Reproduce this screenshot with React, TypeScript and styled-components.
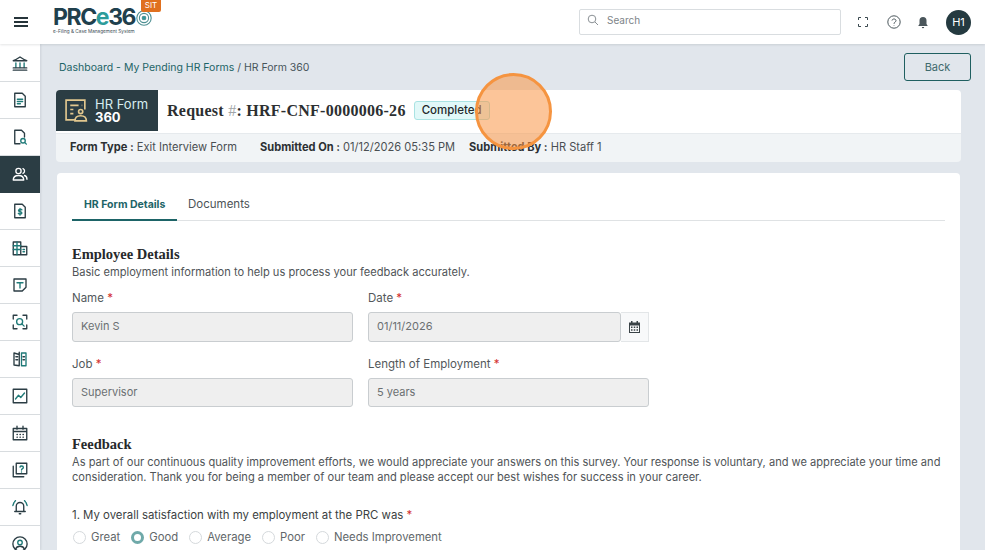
import * as React from 'react'
import styled, { createGlobalStyle } from 'styled-components'

const dark = '#2b3d44'
const teal = '#1f7a78'
const body = '"Inter", "Open Sans", sans-serif'
const serif = '"Liberation Serif", "DejaVu Serif", serif'

const Global = createGlobalStyle`
  html, body { margin: 0; padding: 0; height: 100%; overflow: hidden; }
  body { font-family: ${body}; background: #e1e6ec; color: #3c4043; }
  * { box-sizing: border-box; }
`

const Shell = styled.div`
  position: relative;
  width: 985px;
  height: 550px;
  overflow: hidden;
  display: flex;
  flex-direction: column;
`

const TopBar = styled.header`
  height: 44px;
  flex: none;
  background: #fff;
  display: flex;
  align-items: center;
  box-shadow: 0 1px 2px rgba(40, 50, 60, 0.12);
  z-index: 2;
`

const Burger = styled.button`
  width: 42px;
  height: 44px;
  border: 0;
  background: none;
  padding: 0;
  display: flex;
  flex-direction: column;
  align-items: center;
  justify-content: center;
  gap: 2px;
  span {
    width: 14px;
    height: 2px;
    background: #26343a;
  }
`

const Logo = styled.div`
  position: relative;
  width: 120px;
  margin-left: 11px;
  height: 44px;
  padding-top: 7px;
`

const LogoMark = styled.div`
  display: flex;
  align-items: center;
  height: 21px;
  font-weight: 700;
  font-size: 23px;
  letter-spacing: -1.4px;
  line-height: 21px;
  color: #20404d;
  em {
    font-style: normal;
    color: #2d9c9a;
  }
  svg {
    margin-left: 1px;
  }
`

const LogoSub = styled.div`
  font-size: 4.7px;
  line-height: 6px;
  color: #3b4d55;
  white-space: nowrap;
`

const SitBadge = styled.span`
  position: absolute;
  left: 88px;
  top: 0;
  width: 20px;
  height: 12px;
  background: #e0701f;
  color: #fff;
  font-size: 8px;
  line-height: 10px;
  text-align: center;
  border-radius: 0 0 2px 2px;
`

const SearchBox = styled.div`
  margin-left: 406px;
  width: 262px;
  height: 26px;
  border: 1px solid #d9dde0;
  border-radius: 2px;
  display: flex;
  align-items: center;
  padding: 0 0 4px 7px;
  gap: 8px;
  font-size: 10px;
  color: #7d8488;
`

const TopIcons = styled.div`
  display: flex;
  align-items: center;
  margin-left: 15px;
`

const TopIcon = styled.span<{ $w: number }>`
  width: ${p => p.$w}px;
  display: flex;
  justify-content: center;
`

const Avatar = styled.div`
  width: 25px;
  height: 25px;
  margin-left: 17px;
  border-radius: 50%;
  background: #243a40;
  color: #fff;
  font-size: 11px;
  display: flex;
  align-items: center;
  justify-content: center;
`

const Columns = styled.div`
  flex: 1;
  display: flex;
  min-height: 0;
`

const Sidebar = styled.nav`
  width: 40px;
  flex: none;
  background: #fff;
  padding-top: 1px;
  box-shadow: 1px 0 2px rgba(40, 50, 60, 0.1);
`

const SideItem = styled.div<{ $active?: boolean }>`
  height: 37px;
  display: flex;
  align-items: center;
  justify-content: center;
  background: ${p => (p.$active ? dark : '#fff')};
  border-bottom: 1px solid ${p => (p.$active ? dark : '#d8dcdf')};
`

const Main = styled.main`
  flex: 1;
  min-width: 0;
  padding: 9px 14px 0 16px;
`

const CrumbRow = styled.div`
  height: 28px;
  display: flex;
  align-items: center;
  justify-content: space-between;
  padding-left: 3px;
  font-size: 10.5px;
  color: #48555b;
`

const CrumbLink = styled.span`
  color: #1d6467;
`

const BackButton = styled.button`
  width: 67px;
  height: 28px;
  border: 1px solid #1f5f60;
  border-radius: 3px;
  background: transparent;
  font-family: ${body};
  font-size: 11px;
  color: #3f6a6d;
`

const RequestCard = styled.section`
  margin-top: 9px;
  width: 905px;
  border-radius: 4px 4px 0 0;
  overflow: hidden;
`

const RequestHead = styled.div`
  height: 43px;
  background: #fff;
  display: flex;
  align-items: flex-start;
`

const FormTag = styled.div`
  width: 102px;
  height: 41px;
  background: ${dark};
  color: #fff;
  display: flex;
  align-items: center;
  padding-left: 8px;
  gap: 6px;
`

const FormTagText = styled.div`
  font-size: 13px;
  line-height: 13px;
  color: #d8edf0;
  b {
    display: block;
    color: #fff;
    font-weight: 700;
    font-size: 13px;
  }
`

const RequestTitle = styled.h1`
  margin: 0 0 0 9px;
  line-height: 41px;
  font-family: ${serif};
  font-weight: 700;
  font-size: 16px;
  letter-spacing: 0.26px;
  color: #2c2f31;
  i {
    font-style: normal;
    font-weight: 400;
    color: #a0a5a8;
  }
`

const StatusPill = styled.span`
  margin: 11px 0 0 8px;
  width: 76px;
  height: 19px;
  border: 1px solid #a9e3e3;
  border-radius: 3px;
  background: #e1f8f8;
  font-size: 11.5px;
  font-weight: 500;
  line-height: 16px;
  padding-left: 7px;
  color: #23282b;
`

const MetaStrip = styled.div`
  height: 29px;
  background: #f1f4f6;
  border-top: 1px solid #e6eaed;
  display: flex;
  align-items: center;
  padding: 0 0 3px 14px;
  font-size: 11.1px;
  color: #4a4f52;
  border-radius: 0 0 4px 4px;
`

const MetaItem = styled.span<{ $w: number }>`
  width: ${p => p.$w}px;
  white-space: nowrap;
  b {
    font-weight: 700;
    color: #2c3033;
  }
`

const FormCard = styled.section`
  margin: 11px 0 0 1px;
  width: 903px;
  height: 400px;
  background: #fff;
  border-radius: 4px;
  padding: 17px 15px;
`

const Tabs = styled.div`
  height: 31px;
  display: flex;
  border-bottom: 1px solid #dfe2e4;
`

const Tab = styled.div<{ $active?: boolean }>`
  height: 31px;
  width: ${p => (p.$active ? 105 : 84)}px;
  padding-left: ${p => (p.$active ? 12 : 11)}px;
  line-height: 29px;
  font-size: ${p => (p.$active ? 10.5 : 11.5)}px;
  font-weight: ${p => (p.$active ? 700 : 400)};
  color: ${p => (p.$active ? '#1d6467' : '#4d5356')};
  border-bottom: ${p => (p.$active ? '2px solid #1d6467' : '0')};
`

const SectionTitle = styled.h2<{ $top: number }>`
  margin: ${p => p.$top}px 0 0;
  font-family: ${serif};
  font-weight: 700;
  font-size: 14.5px;
  line-height: 21px;
  color: #26292b;
`

const SectionText = styled.p`
  margin: 0;
  font-size: 11.1px;
  line-height: 15px;
  color: #4f5457;
`

const FieldGrid = styled.div`
  margin-top: 10px;
  display: grid;
  grid-template-columns: 281px 281px;
  column-gap: 15px;
  row-gap: 14px;
`

const Field = styled.div`
  display: flex;
  flex-direction: column;
`

const Label = styled.label`
  height: 16px;
  margin-bottom: 6px;
  font-size: 11.5px;
  line-height: 16px;
  color: #53585b;
  span {
    color: #d32f2f;
  }
`

const InputRow = styled.div`
  display: flex;
`

const Input = styled.div`
  flex: 1;
  height: 30px;
  background: #efefef;
  border: 1px solid #c9cdd0;
  border-radius: 3px;
  padding-left: 8px;
  line-height: 27px;
  font-size: 11px;
  color: #6b6f72;
`

const Addon = styled.div`
  width: 28px;
  height: 30px;
  border: 1px solid #e3e6e8;
  border-left: 0;
  background: #f8f9fa;
  display: flex;
  align-items: center;
  justify-content: center;
`

const Question = styled.div`
  margin-top: 22px;
  font-size: 11.4px;
  line-height: 16px;
  color: #3b3f42;
  span {
    color: #d32f2f;
  }
`

const RadioRow = styled.div`
  margin-top: 7px;
  padding-left: 1px;
  display: flex;
  align-items: center;
  font-size: 11.3px;
  color: #62676a;
`

const RadioLabel = styled.span`
  display: flex;
  align-items: center;
  margin-right: 11px;
  gap: 5px;
`

const RadioDot = styled.span<{ $on?: boolean }>`
  width: 13px;
  height: 13px;
  border-radius: 50%;
  border: ${p => (p.$on ? '3.5px solid #6fa9a9' : '1px solid #d5d9dc')};
  background: #fff;
`

const Spotlight = styled.div`
  position: absolute;
  left: 475px;
  top: 73px;
  width: 77px;
  height: 77px;
  border-radius: 50%;
  border: 3px solid #f59440;
  background: rgba(250, 150, 70, 0.55);
`

const S = (p: { children: React.ReactNode; size?: number; color?: string }) => (
  <svg
    width={p.size || 18}
    height={p.size || 18}
    viewBox="0 0 24 24"
    fill="none"
    stroke={p.color || dark}
    strokeWidth="1.8"
    strokeLinecap="round"
    strokeLinejoin="round"
  >
    {p.children}
  </svg>
)

const sideIcons: React.ReactNode[] = [
  <S key="bank">
    <path d="M3 9c3-1 6-3 9-5 3 2 6 4 9 5z" />
    <path d="M6.500 12v6M12 12v6M17.500 12v6" stroke={teal} />
    <path d="M3 18.500h18M3 21.500h18" />
  </S>,
  <S key="doc">
    <path d="M5 3h10l4 4v14H5z" />
    <path d="M8.500 11h7M8.500 14h7M8.500 17h4" stroke={teal} />
  </S>,
  <S key="search">
    <path d="M12 21H5V3h9l4 4v5" />
    <circle cx="16" cy="17" r="3" stroke={teal} />
    <path d="m18.500 19.500 2 2" stroke={teal} />
  </S>,
  <S key="users" color="#fff">
    <circle cx="10" cy="8" r="3.500" />
    <path d="M3 20c0-4 3-6 7-6s7 2 7 6z" />
    <path d="M16 4.800a3.500 3.500 0 0 1 0 6.400M18 14c2 .6 3.300 2.600 3.300 5" />
  </S>,
  <S key="money">
    <path d="M5 3h10l4 4v14H5z" />
    <path d="M14.500 10.500c-.5-1-4.500-1.300-4.500.8 0 2.200 4.500 1 4.500 3.200 0 2-4 1.900-4.700.6M12 8.500v9" stroke={teal} />
  </S>,
  <S key="building" color={teal}>
    <path d="M3 21V4h10v17zM13 10h8v11h-8" stroke={dark} />
    <path d="M3 9h10M3 14h10M8 4v17M16 14h2M16 17h2" />
  </S>,
  <S key="note">
    <path d="M4 4h16v11l-5 5H4z" />
    <path d="M8 9h8M12 9v7" stroke={teal} />
  </S>,
  <S key="scan">
    <path d="M3 8V3h5M16 3h5v5M21 16v5h-5M8 21H3v-5" />
    <circle cx="11.500" cy="11.500" r="4" stroke={teal} />
    <path d="m14.500 14.500 3 3" stroke={teal} />
  </S>,
  <S key="book">
    <path d="M11 6 4 4v16l7 1V3" />
    <path d="M14 4h6v17h-6z" stroke={teal} />
    <path d="M6.500 9H9M6.500 13H9M16 9h2M16 13h2" />
  </S>,
  <S key="chart">
    <path d="M3 3h18v18H3z" />
    <path d="m6 16 4-5 3 3 5-6" stroke={teal} />
  </S>,
  <S key="calendar">
    <path d="M3 6h18v15H3zM3 10h18M8 3v4M16 3v4" />
    <path d="M8 14h.5M12 14h.5M16 14h.5M8 17.500h.5M12 17.500h.5M16 17.500h.5" />
  </S>,
  <S key="help">
    <path d="M7 3h14v14H7z" />
    <path d="M3 7v14h14" />
    <path d="M12 8c.5-1.800 4.500-1.800 4.500.5 0 1.700-2.500 1.700-2.500 3.500M14 14.500v.2" stroke={teal} />
  </S>,
  <S key="bell">
    <path d="M7 18v-7a5 5 0 0 1 10 0v7zM5 18h14M11 21h2" />
    <path d="M4 6 2.500 10M20 6l1.500 4M6 3.500 4.800 5M18 3.500 19.200 5" stroke={teal} />
  </S>,
  <S key="user">
    <circle cx="12" cy="12" r="9.500" />
    <circle cx="12" cy="10" r="3" stroke={teal} />
    <path d="M6 19c1-3 3-4 6-4s5 1 6 4" />
  </S>,
]

const ReqStar = () => <span> *</span>

const App = () => (
  <Shell>
    <Global />
    <TopBar>
      <Burger aria-label="menu">
        <span />
        <span />
        <span />
      </Burger>
      <Logo>
        <LogoMark>
          PRC<em>e</em>36
          <svg width="16" height="16" viewBox="0 0 16 16" fill="none" stroke="#4d8f92" strokeWidth="1.100">
            <circle cx="8" cy="8" r="7.200" />
            <circle cx="8" cy="8" r="4.600" />
            <circle cx="8" cy="8" r="1.800" fill="#2d9c9a" />
          </svg>
        </LogoMark>
        <LogoSub>e-Filing &amp; Case Management System</LogoSub>
        <SitBadge>SIT</SitBadge>
      </Logo>
      <SearchBox>
        <svg width="12" height="12" viewBox="0 0 12 12" fill="none" stroke="#8a9094" strokeWidth="1">
          <circle cx="5" cy="5" r="3.800" />
          <path d="m8 8 3 3" />
        </svg>
        Search
      </SearchBox>
      <TopIcons>
        <TopIcon $w={14}>
          <svg width="10" height="10" viewBox="0 0 10 10" fill="none" stroke="#3c4a50" strokeWidth="1">
            <path d="M.5 3V.5H3M7 .5h2.500V3M9.500 7v2.500H7M3 9.500H.5V7" />
          </svg>
        </TopIcon>
        <TopIcon $w={47}>
          <svg width="14" height="14" viewBox="0 0 14 14" fill="none" stroke="#4a565b" strokeWidth="1">
            <circle cx="7" cy="7" r="6.200" />
            <path d="M5 5.500C5.200 3.500 9 3.500 9 5.600 9 7.200 7 7 7 8.800M7 10.200v.5" />
          </svg>
        </TopIcon>
        <TopIcon $w={12}>
          <svg width="12" height="13" viewBox="0 0 12 13" fill="#4a565b">
            <path d="M6 1a3.500 3.500 0 0 0-3.500 3.500V8L1.200 10h9.600L9.500 8V4.500A3.500 3.500 0 0 0 6 1zM4.800 11a1.200 1.200 0 0 0 2.400 0z" />
          </svg>
        </TopIcon>
        <Avatar>H1</Avatar>
      </TopIcons>
    </TopBar>
    <Columns>
      <Sidebar>
        {sideIcons.map((icon, i) => (
          <SideItem key={i} $active={i === 3}>
            {icon}
          </SideItem>
        ))}
      </Sidebar>
      <Main>
        <CrumbRow>
          <span>
            <CrumbLink>Dashboard - My Pending HR Forms</CrumbLink> / HR Form 360
          </span>
          <BackButton>Back</BackButton>
        </CrumbRow>
        <RequestCard>
          <RequestHead>
            <FormTag>
              <svg width="25" height="25" viewBox="0 0 24 24" fill="none" stroke="#e2c78e" strokeWidth="1.600">
                <path d="M11 21H2V2h18v9" />
                <path d="M6 7h8M6 11h3M6 15h3M17 7h.5" />
                <circle cx="16" cy="13" r="2" />
                <path d="M10.500 22c0-3.500 2.500-5 5.500-5s5.500 1.500 5.500 5z" />
              </svg>
              <FormTagText>
                HR Form
                <b>360</b>
              </FormTagText>
            </FormTag>
            <RequestTitle>
              Request <i>#</i>: HRF-CNF-0000006-26
            </RequestTitle>
            <StatusPill>Completed</StatusPill>
          </RequestHead>
          <MetaStrip>
            <MetaItem $w={190}>
              <b>Form Type :</b> Exit Interview Form
            </MetaItem>
            <MetaItem $w={209}>
              <b>Submitted On :</b> 01/12/2026 05:35 PM
            </MetaItem>
            <MetaItem $w={140}>
              <b>Submitted By :</b> HR Staff 1
            </MetaItem>
          </MetaStrip>
        </RequestCard>
        <FormCard>
          <Tabs>
            <Tab $active>HR Form Details</Tab>
            <Tab>Documents</Tab>
          </Tabs>
          <SectionTitle $top={23}>Employee Details</SectionTitle>
          <SectionText>Basic employment information to help us process your feedback accurately.</SectionText>
          <FieldGrid>
            <Field>
              <Label>
                Name<ReqStar />
              </Label>
              <Input>Kevin S</Input>
            </Field>
            <Field>
              <Label>
                Date<ReqStar />
              </Label>
              <InputRow>
                <Input>01/11/2026</Input>
                <Addon>
                  <svg width="11" height="12" viewBox="0 0 11 12" fill="#3a4347">
                    <path d="M2 0h1.500v1.500h4V0H9v1.500h2V12H0V1.500h2zM1 4.500V11h9V4.500z" />
                    <path d="M2 5.500h1.500V7H2zM4.750 5.500h1.500V7h-1.500zM7.500 5.500H9V7H7.500zM2 8.200h1.500v1.500H2zM4.750 8.200h1.500v1.500h-1.500zM7.500 8.200H9v1.500H7.500z" />
                  </svg>
                </Addon>
              </InputRow>
            </Field>
            <Field>
              <Label>
                Job<ReqStar />
              </Label>
              <Input>Supervisor</Input>
            </Field>
            <Field>
              <Label>
                Length of Employment<ReqStar />
              </Label>
              <Input>5 years</Input>
            </Field>
          </FieldGrid>
          <SectionTitle $top={27}>Feedback</SectionTitle>
          <SectionText>
            As part of our continuous quality improvement efforts, we would appreciate your answers on this survey. Your
            response is voluntary, and we appreciate your time and consideration. Thank you for being a member of our team
            and please accept our best wishes for success in your career.
          </SectionText>
          <Question>
            1. My overall satisfaction with my employment at the PRC was<ReqStar />
          </Question>
          <RadioRow>
            {['Great', 'Good', 'Average', 'Poor', 'Needs Improvement'].map(o => (
              <RadioLabel key={o}>
                <RadioDot $on={o === 'Good'} />
                {o}
              </RadioLabel>
            ))}
          </RadioRow>
        </FormCard>
      </Main>
    </Columns>
    <Spotlight />
  </Shell>
)

export default App
